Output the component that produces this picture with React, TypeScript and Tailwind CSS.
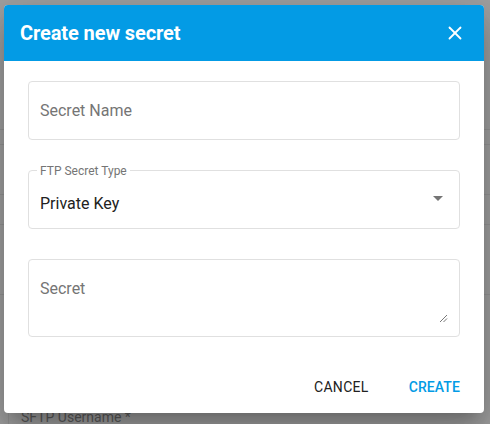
import { X } from 'lucide-react';

export default function App() {
  return (
    <div
      className="relative w-[490px] h-[424px] overflow-hidden bg-[#a0a0a0]"
      style={{ fontFamily: 'Roboto, "Liberation Sans", sans-serif' }}
    >
      {/* PAGE BEHIND OVERLAY */}
      <div className="flex flex-col h-full">
        <div className="h-[130px] border-b border-[#959595]" />
        <div className="h-[15px] border-b border-[#959595]" />
        <div className="h-[50px] border-b border-[#959595]" />
        <div className="h-[30px] border-b border-[#959595]" />
        <div className="h-[70px] border-b border-[#959595]" />
        <div className="flex-1 flex items-end pl-2">
          <div className="border-l border-t border-[#959595] rounded-tl-sm px-3 pb-0 text-[14px] text-[#5c5c5c] leading-none h-[18px] pt-[3px] w-[200px]">
            SFTP Username *
          </div>
        </div>
      </div>

      {/* DIALOG */}
      <div className="absolute left-[4px] top-[5px] w-[480px] h-[408px] bg-white rounded-[4px] shadow-[0_11px_15px_-7px_rgba(0,0,0,0.2),0_24px_38px_3px_rgba(0,0,0,0.14),0_9px_46px_8px_rgba(0,0,0,0.12)] flex flex-col overflow-hidden">
        <div className="h-[56px] bg-[#039be5] flex items-center justify-between pl-4 pr-[18px]">
          <h2 className="text-white text-[20px] font-bold tracking-[-0.1px]">Create new secret</h2>
          <X className="w-[22px] h-[22px] text-white" strokeWidth={2} />
        </div>

        <div className="flex flex-col px-6 pt-5 gap-[30px]">
          <div className="h-[59px] border border-[#e0e0e0] rounded-[4px] flex items-center pl-[11px] pr-3">
            <span className="text-[16px] text-[#757575] pt-[1px]">Secret Name</span>
          </div>

          <div className="relative h-[59px] border border-[#e0e0e0] rounded-[4px] flex items-center justify-between pl-[11px] pr-3">
            <span className="absolute -top-[7px] left-[8px] bg-white px-[3px] text-[12px] leading-[14px] text-[#757575]">
              FTP Secret Type
            </span>
            <span className="text-[16px] text-[#212121] pt-[9px]">Private Key</span>
            <svg width="10" height="5" viewBox="0 0 10 5" className="mr-[4px] mb-[2px]">
              <path d="M0 0 L5 5 L10 0 Z" fill="#757575" />
            </svg>
          </div>

          <div className="relative h-[78px] border border-[#e0e0e0] rounded-[4px] pl-[11px] pr-3 pt-[17px]">
            <span className="text-[16px] text-[#757575]">Secret</span>
            <svg width="9" height="9" viewBox="0 0 9 9" className="absolute right-[11px] bottom-[13px]">
              <path d="M1 8 L8 1 M4.5 8 L8 4.5" stroke="#555" strokeWidth="0.8" />
            </svg>
          </div>
        </div>

        <div className="flex-1 flex items-end justify-end gap-6 pr-4 pb-[8px]">
          <button className="px-2 h-[36px] text-[14px] font-normal tracking-[0.3px] text-[#212121]">CANCEL</button>
          <button className="px-2 h-[36px] text-[14px] font-medium tracking-[0.1px] text-[#039be5]">CREATE</button>
        </div>
      </div>
    </div>
  );
}
